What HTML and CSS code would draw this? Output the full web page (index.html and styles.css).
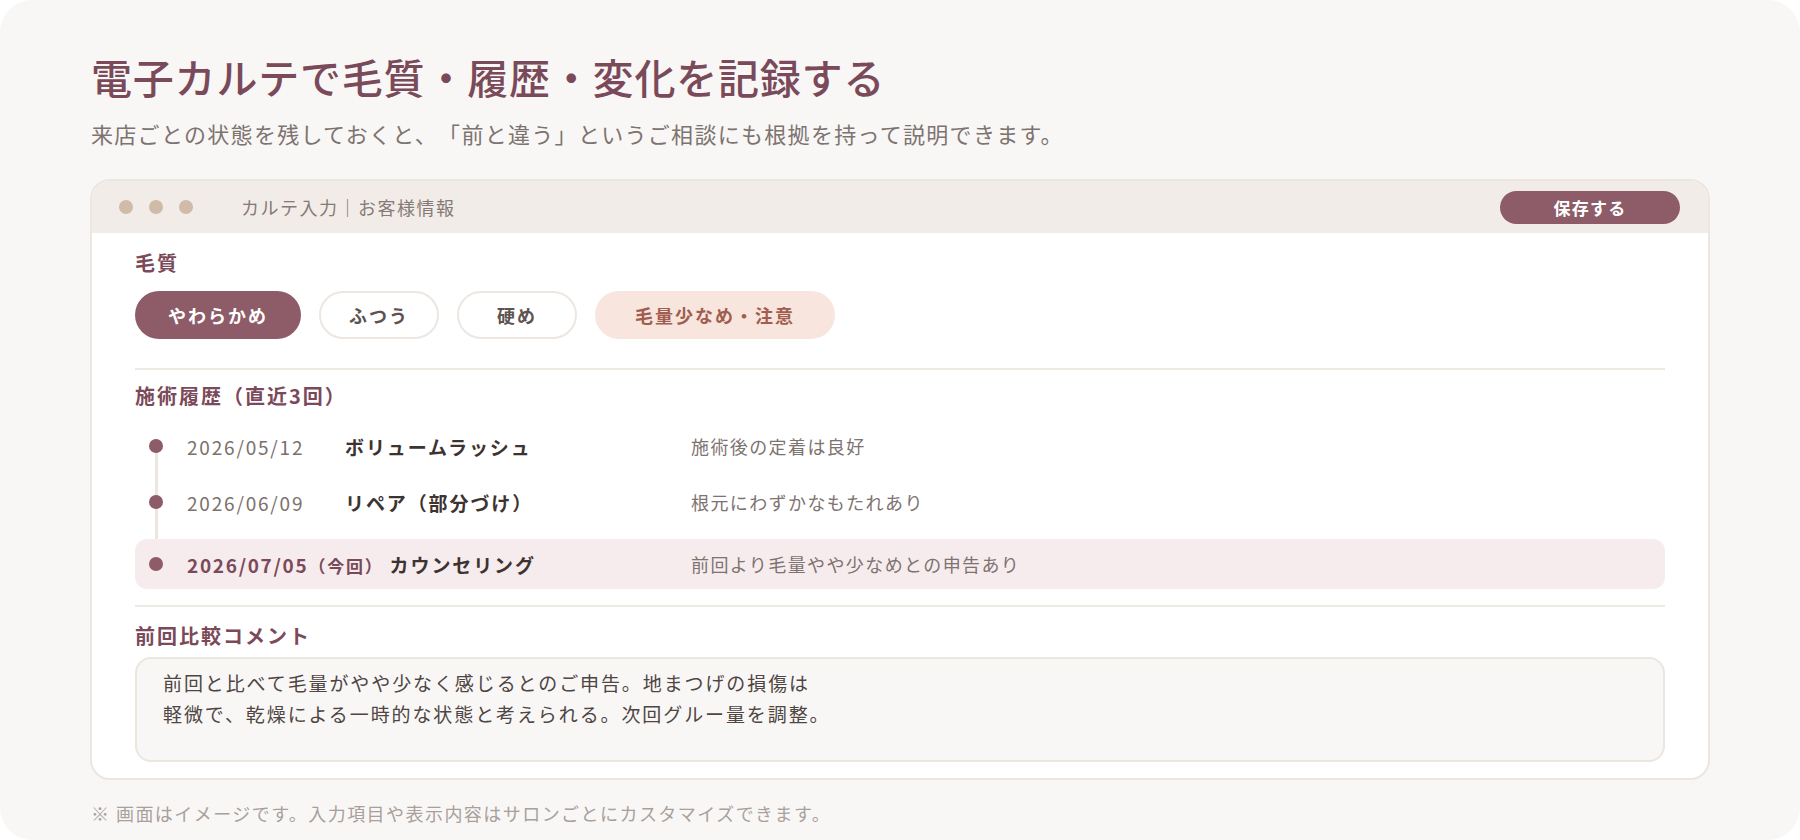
FILE: index.html
```html
<!DOCTYPE html>
<html lang="ja">
<head>
<meta charset="utf-8">
<title>電子カルテ</title>
<link rel="stylesheet" href="styles.css">
</head>
<body>
<section class="panel">
  <h1 class="title">電子カルテで毛質・履歴・変化を記録する</h1>
  <p class="lead">来店ごとの状態を残しておくと、「前と違う」というご相談にも根拠を持って説明できます。</p>

  <div class="window">
    <div class="titlebar">
      <div class="dots"><span class="dot"></span><span class="dot"></span><span class="dot"></span></div>
      <div class="wtitle">カルテ入力｜お客様情報</div>
      <button class="save">保存する</button>
    </div>
    <div class="wbody">
      <div class="label">毛質</div>
      <div class="chips">
        <span class="chip chip-on">やわらかめ</span>
        <span class="chip chip-off">ふつう</span>
        <span class="chip chip-off">硬め</span>
        <span class="chip chip-warn">毛量少なめ・注意</span>
      </div>
      <hr class="rule rule-a">
      <div class="label">施術履歴（直近3回）</div>
      <div class="timeline">
        <div class="row">
          <span class="tdot"></span>
          <span class="main"><span class="date">2026/05/12</span><span class="name">ボリュームラッシュ</span></span>
          <span class="note">施術後の定着は良好</span>
        </div>
        <div class="row">
          <span class="tdot"></span>
          <span class="main"><span class="date">2026/06/09</span><span class="name">リペア（部分づけ）</span></span>
          <span class="note">根元にわずかなもたれあり</span>
        </div>
        <div class="row row-now">
          <span class="tdot"></span>
          <span class="main"><span class="date date-now">2026/07/05<small class="now">（今回）</small></span><span class="name">カウンセリング</span></span>
          <span class="note">前回より毛量やや少なめとの申告あり</span>
        </div>
      </div>
      <hr class="rule rule-b">
      <div class="label">前回比較コメント</div>
      <div class="comment">前回と比べて毛量がやや少なく感じるとのご申告。地まつげの損傷は<br>軽微で、乾燥による一時的な状態と考えられる。次回グルー量を調整。</div>
    </div>
  </div>

  <p class="foot">※ 画面はイメージです。入力項目や表示内容はサロンごとにカスタマイズできます。</p>
</section>
</body>
</html>
```

FILE: styles.css
```css
* { box-sizing: border-box; }
html, body { margin: 0; padding: 0; background: #ffffff; }
body {
  font-family: "Noto Sans CJK JP", "Noto Sans", sans-serif;
  color: #4a3f3c;
  text-spacing-trim: space-all;
}
.panel {
  width: 1800px;
  height: 840px;
  background: #f8f7f5;
  border-radius: 32px;
  padding: 54px 90px 0 90px;
}
.title {
  margin: 0 0 0 1px;
  font-size: 41px;
  line-height: 44px;
  font-weight: 500;
  letter-spacing: 0.8px;
  color: #7b4a5a;
}
.lead {
  margin: 20px 0 0 1px;
  font-size: 22px;
  line-height: 30px;
  letter-spacing: 1.3px;
  color: #7d7370;
}
.window {
  margin-top: 31px;
  width: 1620px;
  background: #ffffff;
  border: 2px solid #ece6e0;
  border-radius: 20px;
  overflow: hidden;
}
.titlebar {
  height: 52px;
  background: #f2ece8;
  display: flex;
  align-items: center;
  padding: 0 28px 0 27px;
}
.dots { display: flex; gap: 16px; }
.dot { width: 14px; height: 14px; border-radius: 50%; background: #cfbba7; }
.wtitle {
  margin-left: 48px;
  font-size: 18px;
  letter-spacing: 1.5px;
  color: #857a76;
  flex: 1;
}
.save {
  width: 180px;
  height: 33px;
  border: none;
  border-radius: 17px;
  background: #8e5b68;
  color: #ffffff;
  font-family: inherit;
  font-size: 17px;
  font-weight: 700;
  letter-spacing: 1.2px;
  padding: 0;
}
.wbody { padding: 16px 43px 16px 43px; }
.label {
  font-size: 20px;
  line-height: 28px;
  font-weight: 700;
  letter-spacing: 2px;
  color: #7b4a5a;
}
.chips { display: flex; gap: 18px; margin-top: 14px; }
.chip {
  height: 48px;
  padding: 0 33px;
  border-radius: 24px;
  display: flex;
  align-items: center;
  justify-content: center;
  font-size: 18px;
  font-weight: 700;
  letter-spacing: 2px;
}
.chip-on { background: #8e5b68; color: #ffffff; }
.chip-off { width: 120px; padding: 0; background: #ffffff; border: 2px solid #ede6e1; color: #5e5350; }
.chip-warn { background: #f7e5de; color: #a05d50; padding: 0 40px; }
.rule { border: none; height: 2px; background: #efe9e4; margin: 0; }
.rule-a { margin: 29px 0 12px; }
.rule-b { margin: 16px 0 15px; }
.timeline { position: relative; margin-top: 8px; }
.timeline::before {
  content: "";
  position: absolute;
  left: 20px;
  top: 28px;
  height: 93px;
  width: 3px;
  background: #ede5df;
}
.row {
  position: relative;
  display: grid;
  grid-template-columns: 14px 480px 1fr;
  column-gap: 24px;
  align-items: center;
  height: 56px;
  padding-left: 14px;
}
.row-now {
  height: 50px;
  margin-top: 9px;
  background: #f7eced;
  border-radius: 12px;
}
.tdot { width: 14px; height: 14px; border-radius: 50%; background: #8e5b68; position: relative; }
.main { display: flex; align-items: baseline; }
.date {
  min-width: 158px;
  font-size: 19px;
  letter-spacing: 1.8px;
  color: #7a706c;
}
.date-now {
  min-width: 0;
  margin-right: 6px;
  font-weight: 700;
  color: #7b4a5a;
  letter-spacing: 1.7px;
}
.now { font-size: 17px; letter-spacing: 1.8px; font-weight: 700; }
.name {
  font-size: 19px;
  font-weight: 700;
  letter-spacing: 1.9px;
  color: #3d3432;
}
.note {
  font-size: 18px;
  letter-spacing: 1.4px;
  color: #7d7370;
}
.comment {
  margin-top: 7px;
  height: 105px;
  background: #f8f7f5;
  border: 2px solid #ece6e0;
  border-radius: 16px;
  padding: 8px 26px;
  font-size: 19px;
  line-height: 31px;
  letter-spacing: 1.9px;
  color: #4f4543;
}
.foot {
  margin: 20px 0 0 1px;
  font-size: 18px;
  line-height: 26px;
  letter-spacing: 1.45px;
  color: #a9a09c;
}
```
